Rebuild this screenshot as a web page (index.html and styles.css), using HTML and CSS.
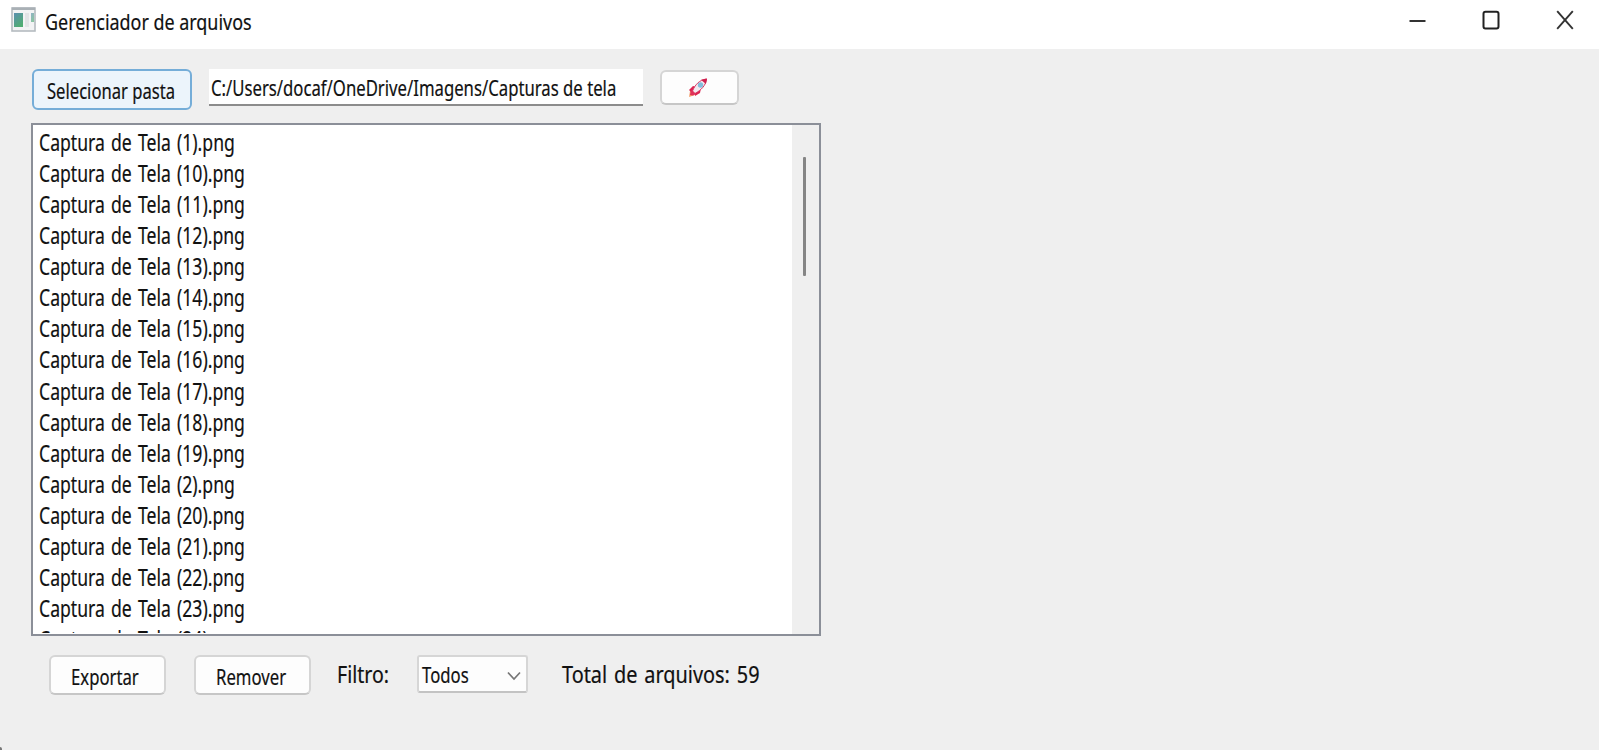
FILE: index.html
```html
<!DOCTYPE html>
<html lang="pt-BR">
<head>
<meta charset="utf-8">
<title>Gerenciador de arquivos</title>
<link rel="stylesheet" href="styles.css">
</head>
<body>
<div class="window">
  <header class="titlebar">
    <svg class="app-icon" width="25" height="25" viewBox="0 0 25 25">
      <defs><linearGradient id="g" x1="0" y1="0" x2="0.6" y2="1"><stop offset="0" stop-color="#5b8fb0"/><stop offset="1" stop-color="#50ad72"/></linearGradient></defs>
      <rect x="1" y="1" width="23" height="23" fill="#f2f3f4" stroke="#b5bbc0" stroke-width="1.6"/>
      <rect x="1" y="0.5" width="23" height="2.500" fill="#a9b0b5"/>
      <rect x="3" y="6" width="9" height="14" fill="url(#g)"/>
      <rect x="14" y="6" width="4" height="14" fill="#e2e4e6"/>
      <rect x="20" y="6" width="3" height="9" fill="url(#g)" opacity=".65"/>
    </svg>
    <h1 class="t title">Gerenciador de arquivos</h1>
    <div class="controls">
      <svg width="18" height="20" viewBox="0 0 18 20"><path d="M1.500 11h16" stroke="#333" stroke-width="2"/></svg>
      <svg width="18" height="20" viewBox="0 0 18 20"><rect x="1.500" y="1.800" width="15" height="16.600" rx="2" fill="none" stroke="#222" stroke-width="2"/></svg>
      <svg width="18" height="20" viewBox="0 0 18 20"><path d="M1.200 1.200L16.800 18.800M16.800 1.200L1.200 18.800" fill="none" stroke="#333" stroke-width="1.900"/></svg>
    </div>
  </header>
  <main class="content">
    <div class="toolbar">
      <button class="button button-active"><span class="t select-label">Selecionar pasta</span></button>
      <div class="path"><span class="t path-label">C:/Users/docaf/OneDrive/Imagens/Capturas de tela</span></div>
      <button class="button button-go" aria-label="Abrir">
        <svg width="20" height="20" viewBox="0 0 20 20">
          <path d="M1 19L2 13l4 .5 1 3.500Z" fill="#f5a06c"/>
          <path d="M1 12l4-4 4 1-5 6ZM7 18l5-3 1-5-6 4Z" fill="#dc2451"/>
          <path d="M4.500 13C7 7 11 2 18.500 1 18 7 13.500 12 7 15.500Z" fill="#f3e9ef" stroke="#d93964" stroke-width="1"/>
          <path d="M13 1.800L19 .500 17.900 6Z" fill="#cf1f4d"/>
          <path d="M3 12l5 4-3 1.500L2 17Z" fill="#e0315b"/>
          <circle cx="12.500" cy="7" r="2.700" fill="#82bddb"/>
        </svg>
      </button>
    </div>
    <div class="list">
      <ul class="files">
        <li><span class="t">Captura de Tela (1).png</span></li>
        <li><span class="t">Captura de Tela (10).png</span></li>
        <li><span class="t">Captura de Tela (11).png</span></li>
        <li><span class="t">Captura de Tela (12).png</span></li>
        <li><span class="t">Captura de Tela (13).png</span></li>
        <li><span class="t">Captura de Tela (14).png</span></li>
        <li><span class="t">Captura de Tela (15).png</span></li>
        <li><span class="t">Captura de Tela (16).png</span></li>
        <li><span class="t">Captura de Tela (17).png</span></li>
        <li><span class="t">Captura de Tela (18).png</span></li>
        <li><span class="t">Captura de Tela (19).png</span></li>
        <li><span class="t">Captura de Tela (2).png</span></li>
        <li><span class="t">Captura de Tela (20).png</span></li>
        <li><span class="t">Captura de Tela (21).png</span></li>
        <li><span class="t">Captura de Tela (22).png</span></li>
        <li><span class="t">Captura de Tela (23).png</span></li>
        <li><span class="t">Captura de Tela (24).png</span></li>
      </ul>
      <div class="scrollbar"><div class="thumb"></div></div>
    </div>
    <footer class="actions">
      <button class="button action"><span class="t export-label">Exportar</span></button>
      <button class="button action"><span class="t remove-label">Remover</span></button>
      <span class="filter"><span class="t filter-label">Filtro:</span></span>
      <div class="combo"><span class="t combo-label">Todos</span>
        <svg width="14" height="10" viewBox="0 0 14 10"><path d="M1 1.500l6 6.500 6-6.500" fill="none" stroke="#777" stroke-width="1.700"/></svg>
      </div>
      <span class="t total-label">Total de arquivos: 59</span>
    </footer>
  </main>
  <div class="corner"></div>
</div>
</body>
</html>
```
FILE: styles.css
```css
* { box-sizing: border-box; }
body { margin: 0; font-family: "Noto Sans", sans-serif; font-size: 22px; color: #111; }
.window { width: 1599px; height: 750px; overflow: hidden; background: #efefef; display: flex; flex-direction: column; }
.t { display: inline-block; flex: none; white-space: nowrap; line-height: 30px; transform-origin: 0 50%; transform: scaleX(.76); -webkit-text-stroke: .2px #111; }
.titlebar { height: 49px; flex: none; background: #fff; display: flex; align-items: flex-start; padding: 7px 25px 0 11px; }
.app-icon { flex: none; }
.title { margin: -1px 0 0 9px; font-size: 22px; font-weight: 400; transform: scaleX(.814); }
.controls { margin-left: auto; display: flex; gap: 56px; padding-top: 3px; }
.content { flex: 1; padding: 20px 0 0 31px; }
.toolbar { height: 54px; display: flex; align-items: flex-start; }
.button { font: inherit; color: inherit; padding: 0; background: #fdfdfd; border: 2px solid #d5d5d5; border-bottom-color: #c6c6c6; border-radius: 6px; display: flex; align-items: flex-start; flex: none; }
.button-active { width: 160px; height: 41px; margin-left: 1px; background: #ecf4fb; border-color: #75add8; padding: 4px 0 0 13px; }
.select-label { transform: scaleX(.755); }
.path { width: 434px; height: 37px; margin-left: 17px; background: #fff; border-bottom: 2px solid #8c8c8c; padding: 3px 0 0 2px; display: flex; }
.button-go { width: 79px; height: 35px; margin: 1px 0 0 17px; padding: 6px 0 0 26px; }
.list { width: 790px; height: 513px; border: 2px solid #8b8f98; background: #fff; display: flex; overflow: hidden; }
.files { flex: 1; min-width: 0; height: 508px; overflow: hidden; margin: 0; padding: 2px 0 0 6px; list-style: none; }
.files li { height: 31.07px; display: flex; }
.files .t { font-size: 23px; word-spacing: 2px; transform: scaleX(.766); }
.scrollbar { width: 27px; background: #efefef; padding: 32px 0 0 11px; }
.thumb { width: 3px; height: 119px; background: #858585; border-radius: 1px; }
.actions { display: flex; align-items: flex-start; padding: 19px 0 0 18px; }
.action { width: 117px; height: 40px; padding: 4px 0 0 20px; }
.action + .action { margin-left: 28px; }
.filter { width: 80px; margin-left: 26px; padding-top: 4px; display: flex; }
.filter-label { font-size: 23px; transform: scaleX(.85); }
.combo { width: 111px; height: 38px; background: #fdfdfd; border: 2px solid #d6d6d6; border-bottom-color: #c3c3c3; border-radius: 3px; display: flex; align-items: flex-start; padding: 2px 5px 0 3px; }
.combo svg { margin: 12px 0 0 auto; }
.total-label { margin: 4px 0 0 34px; font-size: 23px; word-spacing: 2px; transform: scaleX(.864); }
.corner { width: 2px; height: 3px; background: #777; border-radius: 0 2px 0 0; }
```
